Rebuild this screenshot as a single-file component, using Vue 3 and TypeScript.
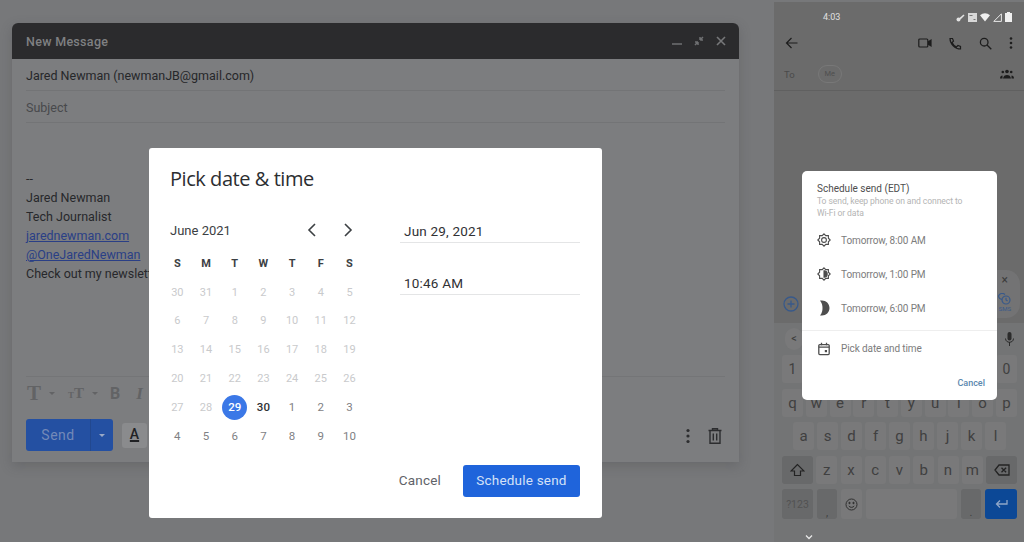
<script setup lang="ts">
interface Day {
  label: number
  kind: 'past' | 'selected' | 'today' | 'next'
}

const weekdays = ['S', 'M', 'T', 'W', 'T', 'F', 'S']

const past = [30, 31, 1, 2, 3, 4, 5, 6, 7, 8, 9, 10, 11, 12, 13, 14, 15, 16, 17, 18, 19, 20, 21, 22, 23, 24, 25, 26, 27, 28]
const days: Day[] = [
  ...past.map((label): Day => ({ label, kind: 'past' })),
  { label: 29, kind: 'selected' },
  { label: 30, kind: 'today' },
  ...[1, 2, 3, 4, 5, 6, 7, 8, 9, 10].map((label): Day => ({ label, kind: 'next' })),
]

const signature = ['Jared Newman', 'Tech Journalist']

const numberKeys = ['1', '2', '3', '4', '5', '6', '7', '8', '9', '0']
const keyRows = [
  ['q', 'w', 'e', 'r', 't', 'y', 'u', 'i', 'o', 'p'],
  ['a', 's', 'd', 'f', 'g', 'h', 'j', 'k', 'l'],
]
const bottomLetters = ['z', 'x', 'c', 'v', 'b', 'n', 'm']
</script>

<template>
  <div class="page">
    <section class="desktop">
      <div class="compose">
        <header class="compose-head">
          <span class="compose-title">New Message</span>
          <div class="win-icons">
            <svg width="14" height="14" viewBox="0 0 14 14"><path d="M2 10h10" stroke="#6f7072" stroke-width="1.5" /></svg>
            <svg width="14" height="14" viewBox="0 0 14 14"><path d="M8 6V3M8 6h3M6 8v3M6 8H3M8 6l3-3M6 8l-3 3" stroke="#6f7072" stroke-width="1.5" fill="none" /></svg>
            <svg width="14" height="14" viewBox="0 0 14 14"><path d="M3 3l8 8M11 3l-8 8" stroke="#77787a" stroke-width="1.6" /></svg>
          </div>
        </header>
        <div class="field from">Jared Newman (newmanJB@gmail.com)</div>
        <div class="field subject">Subject</div>
        <div class="body">
          <div>--</div>
          <div v-for="line in signature" :key="line">{{ line }}</div>
          <div class="link">jarednewman.com</div>
          <div class="link">@OneJaredNewman</div>
          <div>Check out my newsletter</div>
        </div>
        <div class="format-bar">
          <span class="fmt font-name">T</span><i class="caret" />
          <span class="fmt font-size"><small>T</small>T</span><i class="caret" />
          <span class="fmt bold">B</span>
          <span class="fmt italic">I</span>
        </div>
        <div class="actions">
          <div class="send">
            <span class="send-label">Send</span>
            <span class="send-more"><i class="caret light" /></span>
          </div>
          <span class="text-format">A</span>
          <div class="actions-right">
            <svg width="16" height="18" viewBox="0 0 16 18" fill="#2c2d2f"><circle cx="8" cy="3.5" r="1.6" /><circle cx="8" cy="9" r="1.6" /><circle cx="8" cy="14.5" r="1.6" /></svg>
            <svg width="16" height="18" viewBox="0 0 16 18" fill="none" stroke="#2c2d2f" stroke-width="1.4"><path d="M1.5 3.5h13M5.5 3.3V1.7h5v1.6M3 3.5v12.8h10V3.5M6.3 6.5v7M9.7 6.5v7" /></svg>
          </div>
        </div>
      </div>

      <div class="dialog">
        <h2 class="dialog-title">Pick date &amp; time</h2>
        <div class="dialog-main">
          <div class="calendar">
            <div class="month-row">
              <span>June 2021</span>
              <div class="month-nav">
                <svg width="12" height="14" viewBox="0 0 12 14" fill="none" stroke="#3c4043" stroke-width="1.6"><path d="M9 1L3 7l6 6" /></svg>
                <svg width="12" height="14" viewBox="0 0 12 14" fill="none" stroke="#3c4043" stroke-width="1.6"><path d="M3 1l6 6-6 6" /></svg>
              </div>
            </div>
            <div class="grid">
              <span v-for="(w, i) in weekdays" :key="i" class="weekday">{{ w }}</span>
              <span v-for="(d, i) in days" :key="i" class="day" :class="d.kind">{{ d.label }}</span>
            </div>
          </div>
          <div class="inputs">
            <div class="input">Jun 29, 2021</div>
            <div class="input">10:46 AM</div>
          </div>
        </div>
        <div class="dialog-actions">
          <button class="cancel">Cancel</button>
          <button class="schedule">Schedule send</button>
        </div>
      </div>
    </section>

    <section class="phone">
      <div class="status">
        <span class="clock">4:03</span>
        <div class="status-icons">
          <svg width="9" height="9" viewBox="0 0 9 9" fill="#e2e2e2"><circle cx="2.5" cy="6.5" r="2" /><path d="M3.5 5l4-3.5 1 1-4 4z" /></svg>
          <svg width="9" height="9" viewBox="0 0 9 9"><rect width="9" height="9" fill="#d8d8d8" /><path d="M1.5 2.5h3M5.5 6.5h2" stroke="#777" /></svg>
          <svg width="10" height="9" viewBox="0 0 10 9" fill="#f0f0f0"><path d="M0 2.3C3-.5 7-.5 10 2.3L5 8.5z" /></svg>
          <svg width="9" height="9" viewBox="0 0 9 9" fill="none" stroke="#e8e8e8"><path d="M.8 8.4L8.4.8v7.6z" /></svg>
          <svg width="7" height="10" viewBox="0 0 7 10" fill="#f0f0f0"><path d="M2 0h3v1h2v9H0V1h2z" /></svg>
        </div>
      </div>
      <div class="appbar">
        <svg width="14" height="14" viewBox="0 0 14 14" fill="none" stroke="#1d1d1d" stroke-width="1.2"><path d="M12.5 7h-11M6.5 2l-5 5 5 5" /></svg>
        <div class="appbar-right">
          <svg width="14" height="12" viewBox="0 0 14 12" fill="none" stroke="#1d1d1d" stroke-width="1.2"><rect x=".8" y="2" width="9" height="8" rx="1" /><path d="M10 5l3-2v6l-3-2" fill="#1d1d1d" /></svg>
          <svg width="13" height="13" viewBox="0 0 13 13" fill="none" stroke="#1d1d1d" stroke-width="1.2"><path d="M1 1.5h2.5l1 2.6L3 5.5c.8 1.9 2.4 3.5 4.500 4.500l1.400-1.500 2.600 1V12C6 12 1 7 1 1.500z" /></svg>
          <svg width="13" height="13" viewBox="0 0 13 13" fill="none" stroke="#1d1d1d" stroke-width="1.3"><circle cx="5.2" cy="5.2" r="3.8" /><path d="M8 8l4.300 4.300" /></svg>
          <svg width="4" height="12" viewBox="0 0 4 12" fill="#1d1d1d"><circle cx="2" cy="1.5" r="1.3" /><circle cx="2" cy="6" r="1.3" /><circle cx="2" cy="10.5" r="1.3" /></svg>
        </div>
      </div>
      <div class="to-row">
        <span class="to">To</span>
        <span class="chip">Me</span>
        <svg class="people" width="14" height="10" viewBox="0 0 14 10" fill="#1d1d1d"><circle cx="7" cy="2.5" r="1.8" /><circle cx="2.8" cy="3" r="1.3" /><circle cx="11.2" cy="3" r="1.3" /><path d="M3 9.500c.4-2.500 2-3.500 4-3.500s3.600 1 4 3.500zM0 9.500c0-2 1-3 2.500-3v3zM14 9.500c0-2-1-3-2.500-3v3z" /></svg>
      </div>
      <div class="thread">
        <svg class="add" width="16" height="16" viewBox="0 0 16 16" fill="none" stroke="#38598a" stroke-width="1.3"><circle cx="8" cy="8" r="7" /><path d="M8 4.5v7M4.500 8h7" /></svg>
        <div class="sms">
          <span class="sms-close">&times;</span>
          <svg width="14" height="12" viewBox="0 0 14 12" fill="none" stroke="#38598a" stroke-width="1.2"><circle cx="9" cy="7" r="4" /><path d="M9 4.800V7l1.600 1M5 6.500A4 4 0 0 1 1.500 3 4 4 0 0 1 8 1.500" /></svg>
          <span>SMS</span>
        </div>
      </div>
      <div class="keyboard">
        <div class="suggest">
          <span class="back">&lt;</span>
          <svg width="9" height="14" viewBox="0 0 9 14" fill="#2b2b2b"><rect x="2.5" y="0" width="4" height="8.5" rx="2" /><path d="M.5 6.500c0 5 8 5 8 0M4.500 10v4" stroke="#2b2b2b" fill="none" /></svg>
        </div>
        <div class="key-row number-row">
          <span v-for="n in numberKeys" :key="n" class="key">{{ n }}</span>
        </div>
        <div v-for="(row, i) in keyRows" :key="i" class="key-row" :class="{ home: i === 1 }">
          <span v-for="k in row" :key="k" class="key">{{ k }}</span>
        </div>
        <div class="key-row lower">
          <span class="key wide dark">
            <svg width="15" height="14" viewBox="0 0 15 14" fill="none" stroke="#232323" stroke-width="1.2"><path d="M7.500 1.500L1 8h3.500v4.500h6V8H14z" /></svg>
          </span>
          <span v-for="k in bottomLetters" :key="k" class="key">{{ k }}</span>
          <span class="key wide dark">
            <svg width="16" height="12" viewBox="0 0 16 12" fill="none" stroke="#232323" stroke-width="1.3"><path d="M5 1h10v10H5L1 6zM7.500 3.700l4.600 4.600M12.100 3.700L7.500 8.300" /></svg>
          </span>
        </div>
        <div class="key-row lower last">
          <span class="key wide dark sym">?123</span>
          <span class="key punct dark">,</span>
          <span class="key emoji">
            <svg width="13" height="13" viewBox="0 0 13 13" fill="none" stroke="#2f2f2f"><circle cx="6.5" cy="6.5" r="5.5" /><circle cx="4.5" cy="5" r=".7" fill="#2f2f2f" /><circle cx="8.5" cy="5" r=".7" fill="#2f2f2f" /><path d="M3.800 8c1.200 1.800 4.200 1.800 5.400 0" /></svg>
          </span>
          <span class="key space" />
          <span class="key punct dark dot">.</span>
          <span class="key wide enter">
            <svg width="13" height="10" viewBox="0 0 13 10" fill="none" stroke="#8fa6c8" stroke-width="1.3"><path d="M12 1v4H1.500M5 1.500L1.500 5 5 8.500" /></svg>
          </span>
        </div>
        <svg class="hide" width="8" height="6" viewBox="0 0 8 6" fill="none" stroke="#e8e8e8" stroke-width="1.3"><path d="M1 .5l3 3 3-3" /></svg>
      </div>

      <div class="sheet">
        <div class="sheet-title">Schedule send (EDT)</div>
        <div class="sheet-sub">To send, keep phone on and connect to<br />Wi-Fi or data</div>
        <div class="sheet-item">
          <svg width="14" height="14" viewBox="0 0 14 14" fill="none" stroke="#4d4d4d" stroke-width="1.1"><path d="M7 .8l1.800 1.800h2.600v2.600L13.200 7l-1.800 1.800v2.600H8.800L7 13.200l-1.800-1.800H2.600V8.800L.8 7l1.800-1.800V2.600h2.600z" /><circle cx="7" cy="7" r="2.4" /></svg>
          <span>Tomorrow, 8:00 AM</span>
        </div>
        <div class="sheet-item">
          <svg width="14" height="14" viewBox="0 0 14 14" fill="none" stroke="#4d4d4d" stroke-width="1.1"><path d="M7 .8l1.800 1.800h2.600v2.600L13.200 7l-1.800 1.800v2.600H8.800L7 13.200l-1.800-1.800H2.600V8.800L.8 7l1.800-1.800V2.600h2.600z" /><path d="M7 3.800a3.200 3.200 0 0 1 0 6.400z" fill="#4d4d4d" /></svg>
          <span>Tomorrow, 1:00 PM</span>
        </div>
        <div class="sheet-item">
          <svg width="14" height="16" viewBox="0 0 14 16" fill="#4d4d4d"><path d="M3 .5h2c4 0 7.500 3 7.500 7.500S9 15.500 5 15.500H3C5 13 5.500 10.500 5.500 8S5 3 3 .5z" /></svg>
          <span>Tomorrow, 6:00 PM</span>
        </div>
        <div class="sheet-item pick">
          <svg width="14" height="14" viewBox="0 0 14 14" fill="none" stroke="#4d4d4d" stroke-width="1.3"><rect x="1.800" y="2.600" width="10.400" height="10" rx="1" /><path d="M1.800 5.200h10.400M4.500 .8v2.400M9.500 .8v2.400" /><rect x="7.800" y="8" width="2.200" height="2.200" fill="#4d4d4d" stroke="none" /></svg>
          <span>Pick date and time</span>
        </div>
        <div class="sheet-cancel">Cancel</div>
      </div>
    </section>
  </div>
</template>

<style>
html,
body {
  margin: 0;
  overflow: hidden;
}
</style>

<style scoped>
.page {
  width: 1024px;
  height: 542px;
  display: flex;
  overflow: hidden;
  background: #77787a;
  font-family: Roboto, "Liberation Sans", sans-serif;
}

.desktop {
  position: relative;
  width: 774px;
  flex: none;
  padding: 23px 0 0 12px;
  box-sizing: border-box;
}

.compose {
  width: 727px;
  height: 439px;
  display: flex;
  flex-direction: column;
  background: #7c7d7f;
  border-radius: 6px 6px 0 0;
  box-shadow: 0 4px 12px rgba(60, 60, 65, 0.25);
}

.compose-head {
  height: 36px;
  flex: none;
  display: flex;
  align-items: center;
  justify-content: space-between;
  padding: 0 11px 0 14px;
  background: #2b2b2d;
  border-radius: 6px 6px 0 0;
}

.compose-title {
  font-size: 12.5px;
  font-weight: 500;
  letter-spacing: 0.3px;
  color: #7f8082;
}

.win-icons {
  display: flex;
  gap: 8px;
}

.field {
  height: 32px;
  margin: 0 14px;
  line-height: 33px;
  font-size: 12.5px;
  border-bottom: 1px solid #737476;
  box-sizing: border-box;
}

.from {
  color: #26272a;
}

.subject {
  color: #48494c;
}

.body {
  flex: 1;
  padding: 47px 14px 0;
  font-size: 12.5px;
  line-height: 18.9px;
  color: #27282b;
}

.link {
  color: #2a3f86;
  text-decoration: underline;
}

.format-bar {
  height: 43px;
  flex: none;
  margin: 0 14px;
  padding-bottom: 9px;
  display: flex;
  align-items: center;
  border-top: 1px solid #747577;
  box-sizing: border-box;
  color: #626365;
}

.fmt {
  line-height: 1;
}

.font-name {
  margin-left: 1px;
  font-family: "Liberation Serif", serif;
  font-weight: 700;
  font-size: 21px;
}

.font-size {
  margin-left: 13px;
  font-family: "Liberation Serif", serif;
  font-weight: 700;
  font-size: 15px;
}

.font-size small {
  font-size: 9px;
}

.bold {
  margin-left: 12px;
  font-weight: 700;
  font-size: 16px;
}

.italic {
  margin-left: 16px;
  font-style: italic;
  font-weight: 700;
  font-size: 17px;
  font-family: "Liberation Serif", serif;
}

.caret {
  width: 0;
  height: 0;
  margin-left: 8px;
  border-left: 3.5px solid transparent;
  border-right: 3.5px solid transparent;
  border-top: 3.5px solid #626365;
}

.caret.light {
  margin-left: 0;
  border-top-color: #9aa9c6;
}

.actions {
  height: 43px;
  flex: none;
  padding: 0 14px;
  display: flex;
  align-items: flex-start;
  box-sizing: border-box;
}

.send {
  width: 87px;
  height: 32px;
  display: flex;
  background: #2450a2;
  border-radius: 3px;
  color: #7389b8;
  font-size: 14px;
  letter-spacing: 0.5px;
}

.send-label {
  width: 64px;
  line-height: 32px;
  text-align: center;
}

.send-more {
  flex: 1;
  display: flex;
  align-items: center;
  justify-content: center;
  border-left: 1px solid #22488f;
}

.text-format {
  width: 25px;
  height: 25px;
  margin: 4px 0 0 9px;
  background: #8a8b8d;
  border-radius: 3px;
  color: #202124;
  font-size: 14px;
  font-weight: 500;
  line-height: 23px;
  text-align: center;
  text-decoration: underline 2px;
}

.actions-right {
  margin-left: auto;
  margin-top: 8px;
  display: flex;
  gap: 11px;
  margin-right: 2px;
}

.dialog {
  position: absolute;
  left: 149px;
  top: 148px;
  width: 453px;
  height: 370px;
  display: flex;
  flex-direction: column;
  padding: 0 22px 21px 21px;
  box-sizing: border-box;
  background: #fff;
  border-radius: 3px;
}

.dialog-title {
  margin: 17px 0 0;
  font-family: "Open Sans", sans-serif;
  font-size: 20px;
  font-weight: 400;
  line-height: 28px;
  color: #2c2e31;
  letter-spacing: -0.45px;
}

.dialog-main {
  display: flex;
  flex: 1;
  margin-top: 25px;
}

.calendar {
  width: 201px;
  margin-left: -7px;
}

.month-row {
  height: 24px;
  margin-left: 7px;
  display: flex;
  align-items: center;
  justify-content: space-between;
  font-size: 13px;
  color: #3c4043;
}

.month-nav {
  display: flex;
  gap: 24px;
  margin-right: 10px;
}

.grid {
  margin-top: 7px;
  display: grid;
  grid-template-columns: repeat(7, 28.7px);
  grid-auto-rows: 28.8px;
  align-items: center;
  justify-items: center;
  font-size: 11px;
}

.weekday {
  color: #3c4043;
  font-weight: 700;
}

.day.past {
  color: #c9cacc;
}

.day.today {
  color: #303134;
  font-size: 11.5px;
  font-weight: 500;
}

.day.next {
  color: #7f8184;
  font-size: 11.5px;
}

.day.selected {
  width: 25px;
  height: 25px;
  line-height: 25px;
  text-align: center;
  border-radius: 50%;
  background: #3b78e7;
  color: #fff;
  font-size: 11.5px;
  font-weight: 500;
}

.inputs {
  margin-left: 36px;
  width: 180px;
  margin-top: 1px;
  display: flex;
  flex-direction: column;
  gap: 28px;
}

.input {
  height: 24px;
  padding-left: 4px;
  font-size: 13.5px;
  line-height: 24px;
  letter-spacing: 0.2px;
  box-sizing: border-box;
  color: #303134;
  border-bottom: 1px solid #e4e5e6;
}

.dialog-actions {
  display: flex;
  justify-content: flex-end;
  align-items: center;
}

.dialog-actions button {
  border: none;
  font-family: inherit;
  font-size: 13.5px;
  letter-spacing: 0.2px;
  padding: 0 0 2px;
}

.cancel {
  background: none;
  color: #5f6368;
  margin-right: 22px;
}

.schedule {
  width: 117px;
  height: 32px;
  background: #1f64db;
  color: #d4e1f7;
  border-radius: 3px;
}

.phone {
  position: relative;
  flex: 1;
  margin-top: 2px;
  display: flex;
  flex-direction: column;
  background: #6b6b6b;
  color: #2a2a2a;
}

.status {
  height: 30px;
  flex: none;
  display: flex;
  align-items: center;
  justify-content: space-between;
  padding: 0 12px 0 49px;
  box-sizing: border-box;
}

.clock {
  font-size: 9px;
  color: #e0e0e0;
}

.status-icons {
  display: flex;
  align-items: center;
  gap: 3px;
}

.appbar {
  height: 22px;
  flex: none;
  display: flex;
  align-items: center;
  justify-content: space-between;
  padding: 0 11px;
}

.appbar-right {
  display: flex;
  align-items: center;
  gap: 17px;
}

.to-row {
  height: 37px;
  flex: none;
  display: flex;
  align-items: center;
  padding: 4px 10px 0;
  border-bottom: 1px solid #606060;
  box-sizing: border-box;
}

.to {
  font-size: 9.5px;
  color: #4a4a4a;
}

.chip {
  margin-left: 23px;
  width: 24px;
  height: 18px;
  line-height: 16px;
  font-size: 7.5px;
  text-align: center;
  color: #4f4f4f;
  border: 1px solid #787878;
  border-radius: 9px;
  box-sizing: border-box;
}

.people {
  margin-left: auto;
}

.thread {
  flex: 1;
  display: flex;
  align-items: flex-end;
  justify-content: space-between;
  padding: 0 4px 11px 9px;
}

.sms {
  width: 62px;
  height: 48px;
  margin-bottom: -6px;
  padding-right: 9px;
  display: flex;
  flex-direction: column;
  align-items: flex-end;
  box-sizing: border-box;
  background: #737374;
  border-radius: 14px;
  font-size: 6px;
  line-height: 7px;
  color: #38598a;
}

.sms-close {
  margin: 4px 3px 7px 0;
  font-size: 12px;
  line-height: 12px;
  color: #3c3c3c;
}

.keyboard {
  position: relative;
  height: 219px;
  flex: none;
  display: flex;
  flex-direction: column;
  padding: 0 7px 0 8px;
  box-sizing: border-box;
  background: #737475;
}

.suggest {
  height: 32px;
  display: flex;
  align-items: center;
  justify-content: space-between;
  padding-left: 3px;
  margin-right: 3px;
  color: #3e3e3e;
  font-size: 11px;
}

.back {
  width: 18px;
  height: 22px;
  border-radius: 11px;
  background: #79797a;
  line-height: 22px;
  text-align: center;
}

.key-row {
  display: flex;
  justify-content: space-between;
  height: 28px;
  margin-bottom: 5.5px;
}

.home {
  padding: 0 11px;
}

.key {
  width: 21px;
  display: flex;
  align-items: center;
  justify-content: center;
  background: #79797a;
  border-radius: 3px;
  font-size: 15px;
  color: #404040;
}

.number-row .key {
  font-size: 14px;
}

.wide {
  width: 31px;
}

.dark {
  background: #68696a;
}

.sym {
  font-size: 10.5px;
  color: #525252;
}

.punct {
  width: 20px;
  align-items: flex-end;
  font-size: 11px;
}

.space {
  width: 91px;
}

.last {
  height: 30px;
}

.enter {
  width: 32px;
  background: #0c4896;
}

.hide {
  position: absolute;
  left: 31px;
  bottom: 1px;
}

.sheet {
  position: absolute;
  left: 28px;
  top: 169px;
  width: 195px;
  height: 229px;
  padding: 12px 0 0 15px;
  box-sizing: border-box;
  background: #fff;
  border-radius: 5px;
}

.sheet-title {
  font-size: 10px;
  line-height: 12px;
  color: #4e4e4e;
}

.sheet-sub {
  margin: 1px 0 4px;
  font-size: 8.6px;
  line-height: 11.7px;
  letter-spacing: -0.1px;
  color: #b4b4b4;
}

.sheet-item {
  height: 34px;
  display: flex;
  align-items: center;
  gap: 10px;
  font-size: 10px;
  letter-spacing: -0.1px;
  color: #7c7c7c;
}

.sheet-item.pick {
  height: 35px;
  margin: 5px 0 0 -15px;
  padding-left: 15px;
  border-top: 1px solid #eeeeee;
}

.sheet-cancel {
  position: absolute;
  right: 12px;
  bottom: 12px;
  font-size: 9px;
  font-weight: 500;
  color: #5a87ae;
}
</style>
